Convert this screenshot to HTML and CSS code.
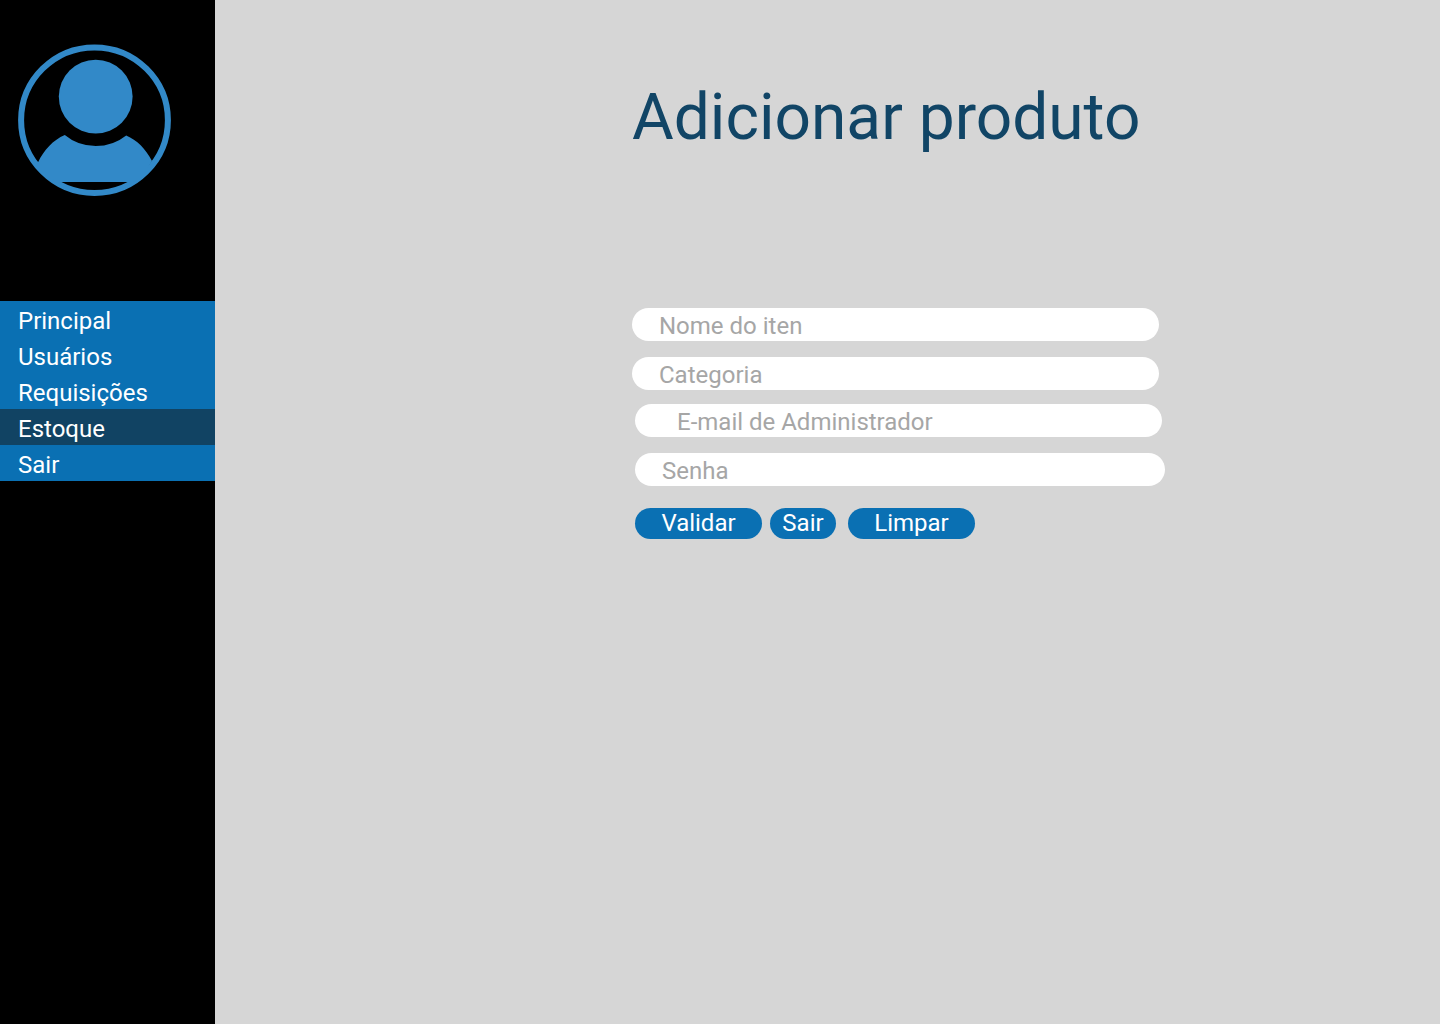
FILE: index.html
```html
<!DOCTYPE html>
<html lang="pt-BR">
<head>
  <meta charset="utf-8">
  <meta name="viewport" content="width=device-width, initial-scale=1">
  <title>Adicionar produto</title>
  <link rel="stylesheet" href="styles.css">
</head>
<body>
  <div class="app">
    <aside class="sidebar">
      <svg class="avatar" viewBox="0 0 153 152" aria-hidden="true">
        <ellipse class="avatar-ring" cx="76.5" cy="76.2" rx="73.4" ry="72.8"/>
        <circle class="avatar-fill" cx="77.7" cy="52.6" r="36.9"/>
        <path class="avatar-fill" d="M20.2 118C26 106 35 96 46.8 91Q60 102 77.7 102Q95 102 108.2 91.4C119 96 127.500 104.500 134 117A73.400 72.800 0 0 1 115 138H38A73.400 72.800 0 0 1 18 118Z"/>
      </svg>
      <nav class="menu">
        <a class="menu-item" href="#principal">Principal</a>
        <a class="menu-item" href="#usuarios">Usuários</a>
        <a class="menu-item" href="#requisicoes">Requisições</a>
        <a class="menu-item menu-item-active" href="#estoque" aria-current="page">Estoque</a>
        <a class="menu-item" href="#sair">Sair</a>
      </nav>
    </aside>
    <main class="content">
      <div class="panel">
        <h1 class="title">Adicionar produto</h1>
        <form class="form">
          <div class="group group-item">
            <input class="field" type="text" placeholder="Nome do iten" aria-label="Nome do iten">
            <input class="field" type="text" placeholder="Categoria" aria-label="Categoria">
          </div>
          <div class="group group-admin">
            <input class="field field-email" type="email" placeholder="E-mail de Administrador" aria-label="E-mail de Administrador">
            <input class="field" type="password" placeholder="Senha" aria-label="Senha">
          </div>
          <div class="actions">
            <button class="button" type="submit">Validar</button>
            <button class="button button-small" type="button">Sair</button>
            <button class="button" type="reset">Limpar</button>
          </div>
        </form>
      </div>
    </main>
  </div>
</body>
</html>
```
FILE: styles.css
```css
* {
  box-sizing: border-box;
}

body {
  margin: 0;
  background: #d6d6d6;
  font-family: Roboto, "Liberation Sans", sans-serif;
  font-size: 24px;
  line-height: 28px;
}

.app {
  display: flex;
  min-height: 100vh;
}

.sidebar {
  flex: 0 0 215px;
  padding-top: 44px;
  background: #000;
}

.avatar {
  display: block;
  width: 153px;
  height: 152px;
  margin: 0 0 105px 18px;
}

.avatar-ring {
  fill: none;
  stroke: #3289c8;
  stroke-width: 6;
}

.avatar-fill {
  fill: #3289c8;
}

.menu {
  display: flex;
  flex-direction: column;
}

.menu-item {
  padding: 6px 18px 2px;
  background: #0a70b3;
  color: #fff;
  text-decoration: none;
}

.menu-item-active {
  background: #114363;
}

.content {
  flex: 1;
  display: grid;
  grid-template-columns: 417fr 533fr 275fr;
  align-items: start;
  padding-top: 80px;
}

.panel {
  grid-column: 2;
}

.title {
  margin: 0 0 152px;
  color: #114566;
  font-size: 64px;
  font-weight: 400;
  line-height: 76px;
  white-space: nowrap;
}

.form {
  display: flex;
  flex-direction: column;
}

.group {
  display: flex;
  flex-direction: column;
  gap: 16px;
}

.group-item {
  margin-bottom: 14px;
  padding-right: 6px;
}

.group-admin {
  margin-bottom: 22px;
  padding-left: 3px;
}

.field {
  width: 100%;
  height: 33px;
  padding: 3px 27px 0;
  border: 0;
  border-radius: 17px;
  background: #fff;
  color: #333;
  font: inherit;
}

.field::placeholder {
  color: #a6a6a6;
  opacity: 1;
}

.field-email {
  width: calc(100% - 3px);
  padding-left: 42px;
}

.actions {
  display: flex;
  padding-left: 3px;
}

.button {
  width: 127px;
  height: 31px;
  padding: 0 0 2px;
  border: 0;
  border-radius: 16px;
  background: #0a70b3;
  color: #fff;
  font: inherit;
  cursor: pointer;
}

.button-small {
  width: 66px;
  margin: 0 12px 0 8px;
}
```
